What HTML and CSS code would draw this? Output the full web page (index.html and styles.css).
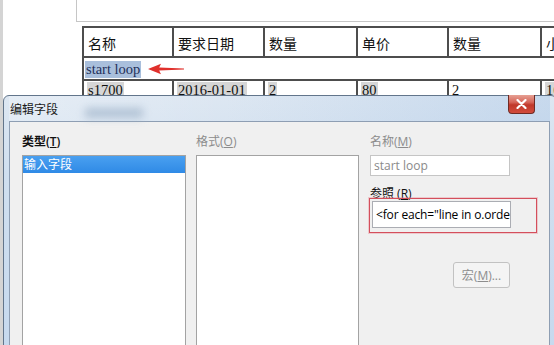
FILE: index.html
```html
<!DOCTYPE html>
<html>
  <head>
    <meta charset="utf-8">
    <title>编辑字段</title>
    <link rel="stylesheet" href="styles.css">
  </head>
  <body>
    <div class="screen">
      <div class="doc">
        <div class="crop"></div>
        <table class="grid">
          <tr class="head">
            <td class="c1">名称</td>
            <td class="c2">要求日期</td>
            <td class="c3">数量</td>
            <td class="c4">单价</td>
            <td class="c5">数量</td>
            <td class="c6">小计</td>
          </tr>
          <tr class="loop">
            <td colspan="6">
              <span class="hl">start loop</span>
              <svg class="arrow" width="36" height="12" viewBox="0 0 36 12">
                <path d="M0 6 L13 0.8 L11.2 4.6 L36 5.6 L36 6.4 L11.2 7.4 L13 11.2 Z" fill="#e0302c"/>
              </svg>
            </td>
          </tr>
          <tr class="data">
            <td><span class="fld">s1700</span></td>
            <td><span class="fld">2016-01-01</span></td>
            <td><span class="fld">2</span></td>
            <td><span class="fld">80</span></td>
            <td>2</td>
            <td><span class="fld">16</span></td>
          </tr>
        </table>
      </div>

      <div class="dialog">
        <div class="titlebar">
          <span class="smudge"></span>
          <span class="title">编辑字段</span>
          <button class="close">
            <svg width="11" height="10" viewBox="0 0 11 10">
              <path d="M1.5 1 L9.5 9 M9.5 1 L1.5 9" stroke="#fff" stroke-width="2.2" stroke-linecap="round"/>
            </svg>
          </button>
        </div>
        <div class="client">
          <div class="col">
            <label class="lbl strong">类型(<u>T</u>)</label>
            <ul class="list">
              <li class="sel">输入字段</li>
            </ul>
          </div>
          <div class="col">
            <label class="lbl off">格式(<u>O</u>)</label>
            <ul class="list narrow"></ul>
          </div>
          <div class="col">
            <label class="lbl off">名称(<u>M</u>)</label>
            <div class="txt name">start loop</div>
            <label class="lbl ref">参照 (<u>R</u>)</label>
            <div class="mark">
              <div class="txt code">&lt;for each="line in o.order"&gt;</div>
            </div>
            <button class="btn">宏(<u>M</u>)...</button>
          </div>
        </div>
      </div>
    </div>
  </body>
</html>
```

FILE: styles.css
```css
html, body {
  margin: 0;
  padding: 0;
  background: #fff;
}
.screen {
  position: relative;
  width: 554px;
  height: 345px;
  overflow: hidden;
  background: #fff;
}
.doc {
  height: 100%;
  border-left: 3px solid #d4d4d4;
  padding-left: 73px;
}
.crop {
  height: 21px;
  border-left: 1px solid #c6c6c6;
  border-bottom: 1px solid #c6c6c6;
}
.grid {
  margin: 4px 0 0 6px;
  border-collapse: separate;
  border-spacing: 0;
  table-layout: fixed;
  width: 548px;
  font: 14.5px "Liberation Serif", "Noto Sans CJK SC", serif;
  color: #111;
}
.grid td {
  box-sizing: border-box;
  border-left: 2px solid #4d4d4d;
  border-top: 2px solid #4d4d4d;
  padding: 0 0 0 3px;
  white-space: nowrap;
  overflow: hidden;
}
.c1 { width: 90px; }
.c2 { width: 91px; }
.c3 { width: 93px; }
.c4 { width: 91px; }
.c5 { width: 93px; }
.c6 { width: 90px; }
.head td {
  height: 30px;
  font-family: "Noto Sans CJK SC", sans-serif;
  font-size: 14px;
  vertical-align: middle;
  padding-left: 4px;
  padding-top: 1px;
}
.loop td {
  height: 23px;
  padding: 1px 0 0 1px;
  vertical-align: middle;
}
.hl {
  background: #a9bfdc;
  padding: 0 1px 1px;
  color: #1f2f5a;
}
.arrow {
  vertical-align: -1px;
  margin-left: 3px;
}
.data td {
  height: 24px;
  vertical-align: top;
  padding-top: 1px;
}
.fld {
  background: #d6d6d6;
  padding: 0 1px;
}

/* dialog window */
.dialog {
  position: absolute;
  left: 3px;
  top: 95px;
  width: 554px;
  height: 262px;
  box-sizing: border-box;
  display: flex;
  flex-direction: column;
  border: 1px solid #62758b;
  border-radius: 6px 6px 0 0;
  padding: 0 6px 0 5px;
  background: linear-gradient(180deg, #dde7f2 0, #d0dfef 30%, #c6d9ee 100%);
  font: 12px "Open Sans", "Noto Sans CJK SC", sans-serif;
  color: #000;
}
.titlebar {
  position: relative;
  height: 25px;
  display: flex;
  align-items: center;
  background: linear-gradient(90deg, rgba(255,255,255,.25), rgba(255,255,255,0) 40%, rgba(150,185,225,.3));
}
.smudge {
  position: absolute;
  left: 76px;
  top: 12px;
  width: 58px;
  height: 10px;
  background: #9fb3c9;
  filter: blur(4px);
  opacity: .7;
}
.title {
  position: relative;
  padding-left: 1px;
  color: #1a1a1a;
}
.close {
  align-self: flex-start;
  margin: -1px 15px 0 auto;
  width: 27px;
  height: 19px;
  padding: 0;
  border: 1px solid #6f2b24;
  border-top: 0;
  border-radius: 0 0 4px 4px;
  background: linear-gradient(180deg, #e6a093 0, #d6665a 40%, #c0382a 55%, #d24c3c 100%);
  display: flex;
  align-items: center;
  justify-content: center;
}
.client {
  flex: 1;
  background: #f0f0f0;
  border: 1px solid #8e9eb3;
  border-bottom: 0;
  padding: 10px 0 0 12px;
  display: grid;
  grid-template-columns: 174px 174px 1fr;
  align-content: start;
}
.col {
  display: flex;
  flex-direction: column;
  align-items: flex-start;
}
.lbl {
  display: block;
  height: 20px;
  line-height: 20px;
  margin-bottom: 3px;
}
.strong {
  font-weight: 600;
  color: #111;
}
.off {
  color: #8c8c8c;
}
.list {
  box-sizing: border-box;
  width: 164px;
  height: 200px;
  margin: 0;
  padding: 0;
  list-style: none;
  background: #fff;
  border: 1px solid #a3a3a3;
}
.list.narrow {
  width: 163px;
}
.sel {
  height: 17px;
  line-height: 17px;
  padding-left: 1px;
  background: linear-gradient(180deg, #4aa0f0, #2f8ae6);
  color: #fff;
}
.txt {
  box-sizing: border-box;
  background: #fff;
  white-space: nowrap;
  overflow: hidden;
}
.name {
  width: 140px;
  height: 21px;
  line-height: 19px;
  padding-left: 3px;
  border: 1px solid #c5c5c5;
  color: #8a8a8a;
}
.ref {
  height: 16px;
  line-height: 16px;
  margin: 10px 0 -4px;
  color: #111;
}
.mark {
  box-sizing: border-box;
  width: 168px;
  margin-left: -1px;
  padding: 2px 0 4px 2px;
  border: 1px solid #d44f5c;
  box-shadow: 0 0 0 1px rgba(232, 130, 140, .35);
}
.code {
  width: 139px;
  height: 27px;
  line-height: 25px;
  padding-left: 3px;
  border: 1px solid #abadb3;
  font-size: 12px;
  letter-spacing: -0.15px;
  color: #000;
}
.btn {
  margin: 29px 0 0 83px;
  width: 57px;
  height: 26px;
  padding: 0;
  border: 1px solid #c2c2c2;
  border-radius: 3px;
  background: #f4f4f4;
  color: #8d8d8d;
  font: inherit;
}
```
